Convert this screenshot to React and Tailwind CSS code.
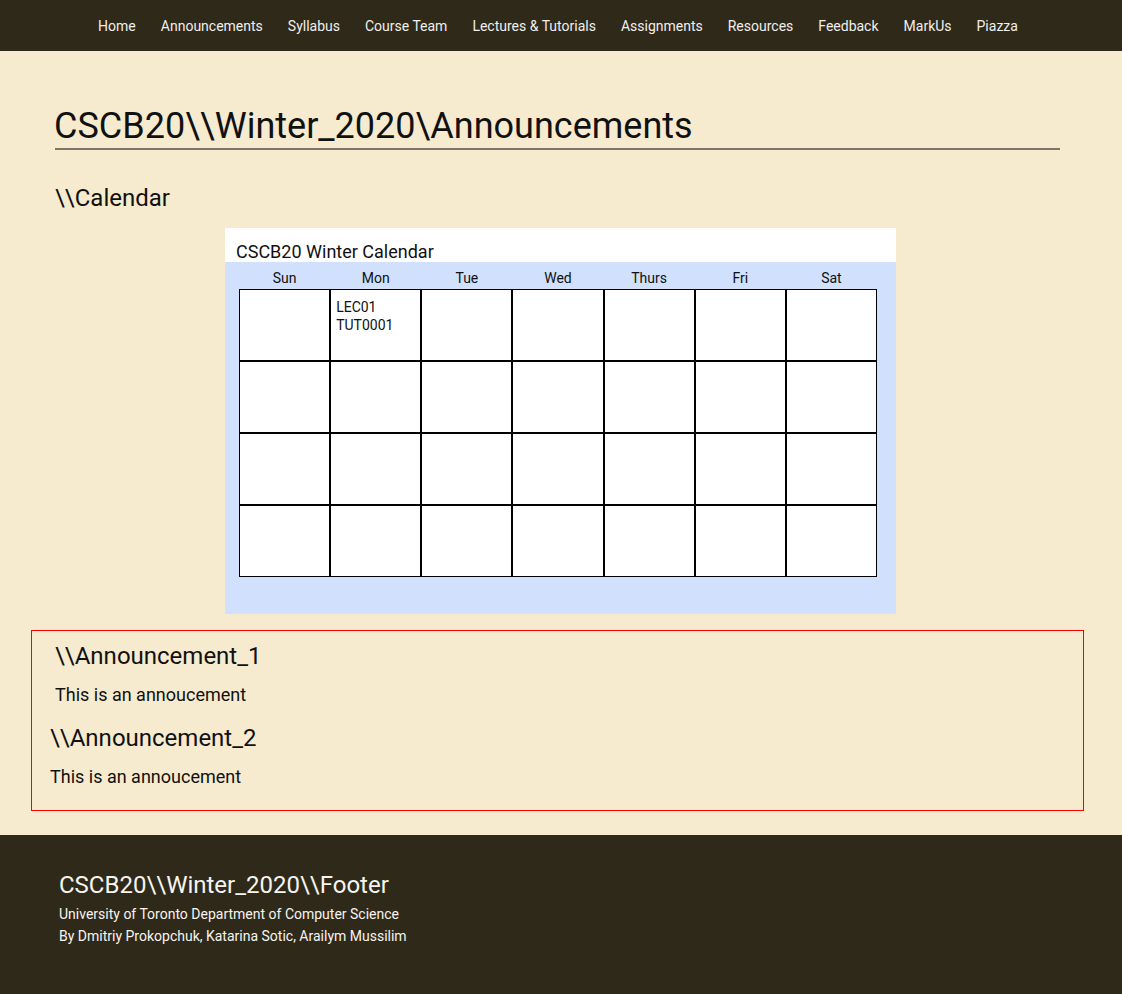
import React from "react";

const navItems = [
  "Home",
  "Announcements",
  "Syllabus",
  "Course Team",
  "Lectures & Tutorials",
  "Assignments",
  "Resources",
  "Feedback",
  "MarkUs",
  "Piazza",
];

const days = ["Sun", "Mon", "Tue", "Wed", "Thurs", "Fri", "Sat"];

export default function App() {
  const cells = Array.from({ length: 28 }, (_, i) => i);
  return (
    <div
      className="min-h-[994px] bg-[#f6ebcf] text-[#111] flex flex-col"
      style={{ fontFamily: "Roboto, 'Noto Sans', Arial, sans-serif" }}
    >
      <nav className="h-[51px] bg-[#2f291a] flex items-center justify-center gap-[25px] pr-[6px] text-[14px] text-[#f0efec]">
        {navItems.map((n) => (
          <span key={n} className="leading-[16px] pt-[1px]">
            {n}
          </span>
        ))}
      </nav>

      <main className="flex flex-col">
        <h1 className="mt-[54px] ml-[55px] mr-[62px] text-[36px] leading-[43px] border-b-2 border-[#7d7565] font-normal">
          <span className="-ml-[1px]">CSCB20\\Winter_2020\Announcements</span>
        </h1>

        <h2 className="mt-[34px] ml-[55px] text-[24px] leading-[28px] font-normal">
          \\Calendar
        </h2>

        <section className="mt-[16px] ml-[225px] w-[671px] bg-[#d0e0fd]">
          <div className="h-[34px] bg-white pt-[13px] pl-[11px] text-[18px] leading-[21px]">
            CSCB20 Winter Calendar
          </div>
          <div className="pl-[14px] pr-[19px] pb-[37px]">
            <div className="grid grid-cols-7 pt-[8px] pb-[3px] text-[14px] leading-[16px] text-center">
              {days.map((d) => (
                <div key={d}>{d}</div>
              ))}
            </div>
            <div className="grid grid-cols-7">
              {cells.map((i) => (
                <div
                  key={i}
                  className="h-[72px] bg-white border border-black pt-[8px] pl-[5px] text-[14px] leading-[18px]"
                >
                  {i === 1 && (
                    <>
                      <div>LEC01</div>
                      <div>TUT0001</div>
                    </>
                  )}
                </div>
              ))}
            </div>
          </div>
        </section>

        <section className="mt-[16px] ml-[31px] mr-[38px] border border-[#ff0000] pt-[11px] pb-[23px]">
          <div className="pl-[23px]">
            <h3 className="text-[24px] leading-[28px] font-normal">\\Announcement_1</h3>
            <p className="mt-[14px] text-[18px] leading-[21px]">This is an annoucement</p>
          </div>
          <div className="pl-[18px] mt-[19px]">
            <h3 className="text-[24px] leading-[28px] font-normal">\\Announcement_2</h3>
            <p className="mt-[14px] text-[18px] leading-[21px]">This is an annoucement</p>
          </div>
        </section>
      </main>

      <footer className="mt-[24px] h-[159px] bg-[#2f291a] text-[#f6f4ef] pt-[36px] pl-[59px]">
        <div className="text-[24px] leading-[28px]">CSCB20\\Winter_2020\\Footer</div>
        <div className="mt-[4px] text-[14px] leading-[22px]">
          University of Toronto Department of Computer Science
        </div>
        <div className="text-[14px] leading-[22px]">
          By Dmitriy Prokopchuk, Katarina Sotic, Arailym Mussilim
        </div>
      </footer>
    </div>
  );
}
